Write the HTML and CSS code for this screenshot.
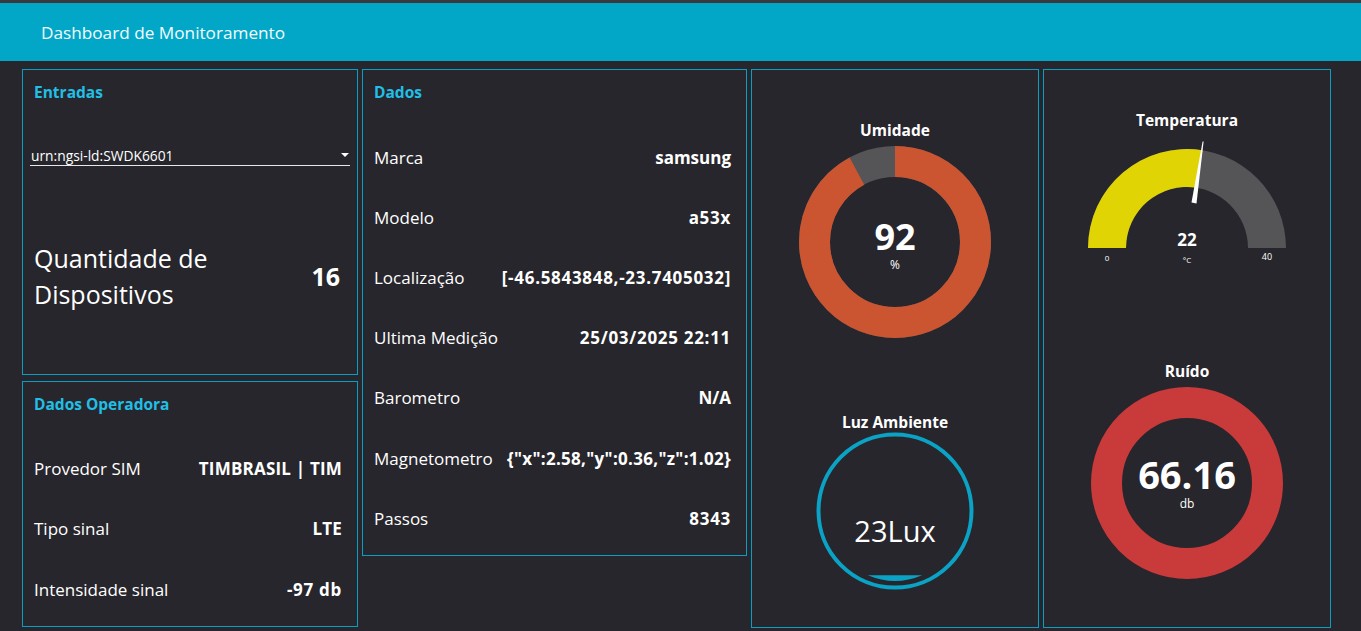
FILE: index.html
```html
<!DOCTYPE html>
<html lang="pt">
<head>
<meta charset="utf-8">
<title>Dashboard de Monitoramento</title>
<link rel="stylesheet" href="styles.css">
</head>
<body>
<div class="topline"></div>
<header class="header">Dashboard de Monitoramento</header>
<main class="grid">
  <div class="col col1">
    <section class="card entradas">
      <h2 class="card-title">Entradas</h2>
      <div class="select">
        <span>urn:ngsi-ld:SWDK6601</span>
        <span class="caret"></span>
      </div>
      <div class="count">
        <span class="count-label">Quantidade de<br>Dispositivos</span>
        <span class="count-value">16</span>
      </div>
    </section>
    <section class="card operadora">
      <h2 class="card-title">Dados Operadora</h2>
      <div class="row"><span class="lbl">Provedor SIM</span><span class="val">TIMBRASIL | TIM</span></div>
      <div class="row"><span class="lbl">Tipo sinal</span><span class="val">LTE</span></div>
      <div class="row"><span class="lbl">Intensidade sinal</span><span class="val num">-97 db</span></div>
    </section>
  </div>
  <div class="col col2">
    <section class="card dados">
      <h2 class="card-title">Dados</h2>
      <div class="row"><span class="lbl">Marca</span><span class="val">samsung</span></div>
      <div class="row"><span class="lbl">Modelo</span><span class="val num">a53x</span></div>
      <div class="row"><span class="lbl">Localização</span><span class="val num">[-46.5843848,-23.7405032]</span></div>
      <div class="row"><span class="lbl">Ultima Medição</span><span class="val num">25/03/2025 22:11</span></div>
      <div class="row"><span class="lbl">Barometro</span><span class="val">N/A</span></div>
      <div class="row"><span class="lbl">Magnetometro</span><span class="val mag">{"x":2.58,"y":0.36,"z":1.02}</span></div>
      <div class="row"><span class="lbl">Passos</span><span class="val num">8343</span></div>
    </section>
  </div>
  <div class="col col3">
    <section class="card gauges g3">
      <div class="gauge umidade">
        <div class="g-title">Umidade</div>
        <svg class="donut" width="192" height="192" viewBox="0 0 192 192">
          <circle cx="96" cy="96" r="80.5" fill="none" stroke="#555457" stroke-width="31"/>
          <circle cx="96" cy="96" r="80.5" fill="none" stroke="#cb5431" stroke-width="31" stroke-dasharray="465.3 600" transform="rotate(-90 96 96)"/>
          <text x="96" y="104" class="big" text-anchor="middle">92</text>
          <text x="96" y="123" class="unit" text-anchor="middle">%</text>
        </svg>
      </div>
      <div class="gauge luz">
        <div class="g-title">Luz Ambiente</div>
        <svg width="160" height="160" viewBox="0 0 160 160">
          <circle cx="80" cy="80" r="76.5" fill="none" stroke="#0aa3c6" stroke-width="4"/>
          <path d="M 52.8 144.2 L 107.2 144.2 A 70 70 0 0 1 52.8 144.2 Z" fill="#0aa3c6"/>
          <text x="80" y="111" class="lux" text-anchor="middle">23Lux</text>
        </svg>
      </div>
    </section>
  </div>
  <div class="col col4">
    <section class="card gauges g4">
      <div class="gauge temp">
        <div class="g-title">Temperatura</div>
        <svg width="220" height="125" viewBox="0 0 220 125">
          <path d="M 11 108 A 99 99 0 0 1 209 108 L 171 108 A 61 61 0 0 0 49 108 Z" fill="#555457"/>
          <path d="M 11 108 A 99 99 0 0 1 125.49 10.22 L 119.54 47.75 A 61 61 0 0 0 49 108 Z" fill="#e1d405"/>
          <polygon points="114.5,62.6 119.5,63.4 126.6,1.5 125.6,1.4" fill="#ffffff"/>
          <text x="110" y="106" class="tval" text-anchor="middle">22</text>
          <text x="30" y="121" class="tick" text-anchor="middle">0</text>
          <text x="110" y="123" class="tick" text-anchor="middle">°C</text>
          <text x="190" y="120" class="tick strong" text-anchor="middle">40</text>
        </svg>
      </div>
      <div class="gauge ruido">
        <div class="g-title">Ruído</div>
        <svg class="donut" width="192" height="192" viewBox="0 0 192 192">
          <circle cx="96" cy="96" r="80.5" fill="none" stroke="#c93a3a" stroke-width="31"/>
          <text x="96" y="102" class="big2" text-anchor="middle">66.16</text>
          <text x="96" y="121" class="unit" text-anchor="middle">db</text>
        </svg>
      </div>
    </section>
  </div>
</main>
</body>
</html>
```
FILE: styles.css
```css
* { box-sizing: border-box; }
html, body {
  margin: 0;
  padding: 0;
  background: #27262c;
  color: #ffffff;
  font-family: "Open Sans", "Noto Sans", sans-serif;
  height: 631px;
  overflow: hidden;
}
.topline {
  height: 3px;
  background: #3a3a3e;
}
.header {
  height: 58px;
  background: #02a7c8;
  color: #f4fbfd;
  font-size: 17.2px;
  line-height: 60px;
  padding-left: 41px;
}
.grid {
  display: grid;
  grid-template-columns: 336px 385px 288px 288px;
  column-gap: 4px;
  padding: 8px 0 0 22px;
}
.col {
  display: flex;
  flex-direction: column;
  gap: 6px;
}
.card {
  border: 1px solid #0a9fc2;
  background: #27262c;
}
.card-title {
  margin: 0;
  font-size: 15.5px;
  font-weight: 700;
  color: #21bfe5;
  line-height: 20px;
}
.entradas {
  height: 306px;
  padding: 12px 15px 0 11px;
}
.select {
  margin: 43px -8px 0 -4px;
  height: 21px;
  border-bottom: 1px solid #e8e8e8;
  display: flex;
  justify-content: space-between;
  align-items: center;
  font-size: 13.8px;
  padding: 0 1px 0 1px;
}
.caret {
  width: 0;
  height: 0;
  border-left: 4px solid transparent;
  border-right: 4px solid transparent;
  border-top: 4px solid #ffffff;
}
.count {
  margin-top: 74px;
  display: flex;
  justify-content: space-between;
  align-items: center;
}
.count-label {
  font-size: 25px;
  line-height: 36px;
}
.count-value {
  font-size: 25px;
  font-weight: 700;
  padding-right: 2px;
}
.operadora {
  height: 246px;
  padding: 12px 15px 0 11px;
}
.operadora .card-title { margin-bottom: 24px; }
.row {
  height: 60.5px;
  display: flex;
  justify-content: space-between;
  align-items: center;
  font-size: 17px;
}
.val { font-weight: 700; }
.operadora .val { letter-spacing: 0.2px; }
.operadora .val.num { letter-spacing: 0.7px; }
.num { letter-spacing: 0.7px; }
.mag { letter-spacing: 0.3px; }
.dados {
  height: 487px;
  padding: 12px 15px 0 11px;
}
.dados .row { height: 60.2px; }
.dados .card-title { margin-bottom: 25px; }
.gauges {
  height: 559px;
  display: flex;
  flex-direction: column;
  align-items: center;
}
.gauge {
  display: flex;
  flex-direction: column;
  align-items: center;
}
.g-title {
  font-size: 15.5px;
  font-weight: 700;
  line-height: 20px;
}
.g3 { padding-top: 50px; }
.umidade .donut { margin-top: 6px; }
.luz { margin-top: 74px; }
.luz svg { margin-top: -1px; }
.g4 { padding-top: 40px; }
.temp svg { margin-top: 10px; }
.ruido { margin-top: 96px; }
.ruido .donut { margin-top: 6px; }
svg text { fill: #ffffff; font-family: "Open Sans", "Noto Sans", sans-serif; }
.big { font-size: 36px; font-weight: 700; }
.big2 { font-size: 38px; font-weight: 700; }
.unit { font-size: 12px; }
.lux { font-size: 29px; font-weight: 400; }
.tval { font-size: 17px; font-weight: 700; }
.tick { font-size: 8px; }
.tick.strong { font-size: 9px; }
```
